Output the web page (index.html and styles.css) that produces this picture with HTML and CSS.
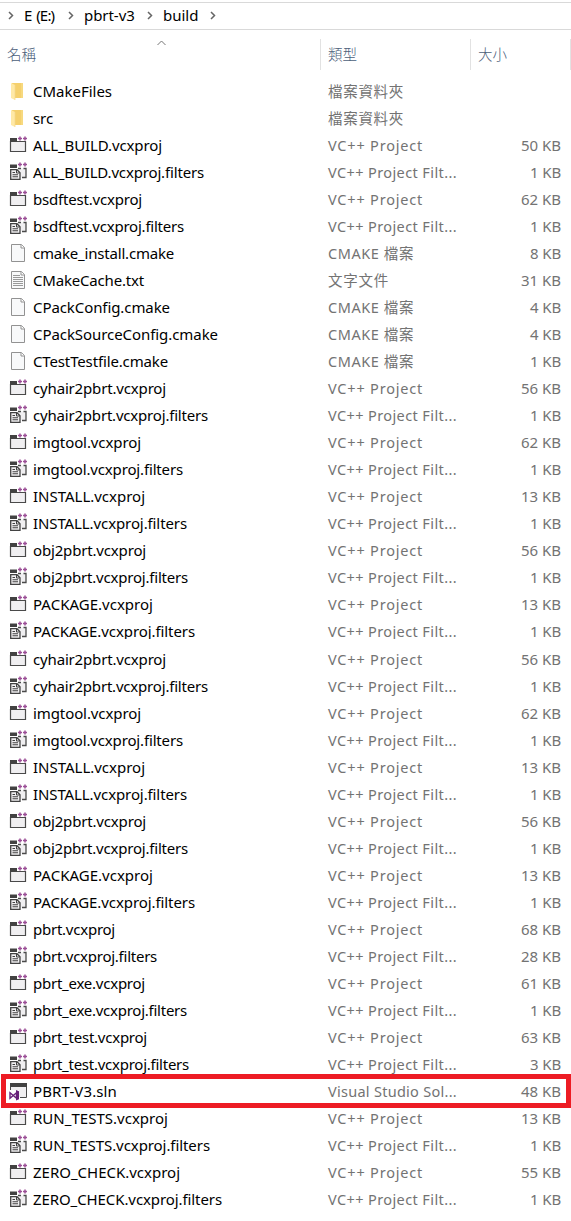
FILE: index.html
```html
<!DOCTYPE html>
<html lang="zh-Hant">
<head>
<meta charset="utf-8">
<title>build</title>
<link rel="stylesheet" href="styles.css">
</head>
<body>
<svg class="sprite" aria-hidden="true">
  <symbol id="folder" viewBox="0 0 20 20">
    <path d="M4 2h10v11h1v4H4z" fill="#f5d06d"/>
    <path d="M13 2h2v15h-2z" fill="#f7d97f"/>
    <path d="M3 2l4 2v15l-4-2z" fill="#ffe9a6"/>
    <path d="M7 4v15" stroke="#f3d98c" stroke-width=".7"/>
  </symbol>
  <symbol id="plus" viewBox="0 0 9 5">
    <path d="M0 2.500h4M2 .5v4M5 2.500h4M7 .5v4" stroke="#9b4f96" stroke-width="1.500" fill="none"/>
  </symbol>
  <symbol id="project" viewBox="0 0 20 20">
    <path d="M2.500 6.500h15v10h-15z" fill="#f0eff1" stroke="#4a4a4a" stroke-width="1.200"/>
    <path d="M2 3h7v4H2z" fill="#424242"/>
    <use href="#plus" x="10" y="1" width="9" height="5"/>
  </symbol>
  <symbol id="filters" viewBox="0 0 20 20">
    <path d="M10 6.500h8v9h-5z" fill="#f0eff1"/>
    <path d="M10 6.500h3M15.500 6.500H18v9h-4" fill="none" stroke="#4a4a4a" stroke-width="1.300"/>
    <path d="M2 2.500h7v3.500H2z" fill="#424242"/>
    <path d="M2.700 7.700h6.300l3 3v6.600H2.700z" fill="#f0eff1" stroke="#424242" stroke-width="1.300"/>
    <path d="M4.500 10.500H7M4.500 12.700h5.500M4.500 14.800h5.500" stroke="#424242" stroke-width="1.100"/>
    <path d="M8.500 8v3h3" fill="none" stroke="#424242"/>
    <use href="#plus" x="10" y="0" width="9" height="5"/>
  </symbol>
  <symbol id="file" viewBox="0 0 20 20">
    <path d="M3.500 1.500h10l3 3v14h-13z" fill="#f8f9fa" stroke="#929292"/>
    <path d="M13 1.500v3.500h3.500" fill="#fff" stroke="#929292"/>
  </symbol>
  <symbol id="text" viewBox="0 0 20 20">
    <use href="#file" width="20" height="20"/>
    <path d="M5 5.500h7M5 7.500h10M5 9.500h10M5 11.500h10M5 13.500h10M5 15.500h10" stroke="#999"/>
  </symbol>
  <symbol id="solution" viewBox="0 0 20 20">
    <path d="M3 6h15v10h-7V9H3z" fill="#f0eff1"/>
    <path d="M2.500 4v5M12 16.500h6.500V4" fill="none" stroke="#4a4a4a"/>
    <path d="M2 2h17v4H2z" fill="#424242"/>
    <path d="M2 11.800v5.400l6.500-5.500v5.600z" fill="#fff" stroke="#68217a" stroke-width="1.400"/>
    <path d="M8 9l3 1.200v8L8 19.400z" fill="#68217a"/>
  </symbol>
</svg>

<nav class="crumbs">
  <svg class="chev" viewBox="0 0 6 9"><path d="M1 1l3.500 3.500L1 8"/></svg>
  <span class="crumb drive">E (E:)</span>
  <svg class="chev" viewBox="0 0 6 9"><path d="M1 1l3.500 3.500L1 8"/></svg>
  <span class="crumb repo">pbrt-v3</span>
  <svg class="chev" viewBox="0 0 6 9"><path d="M1 1l3.500 3.500L1 8"/></svg>
  <span class="crumb current">build</span>
  <svg class="chev" viewBox="0 0 6 9"><path d="M1 1l3.500 3.500L1 8"/></svg>
</nav>
<header class="columns">
  <div class="head">名稱<svg class="sort" viewBox="0 0 9 6"><path d="M.5 5l4-4 4 4"/></svg></div>
  <div class="head">類型</div>
  <div class="head">大小</div>
</header>
<main id="list"></main>
<script src="list.js"></script>
</body>
</html>
```

FILE: styles.css
```css
* { box-sizing: border-box; }
body {
  margin: 0;
  height: 1221px;
  overflow: hidden;
  background: #fff;
  color: #000;
  font: 15px/27px "Noto Sans", "Noto Sans CJK TC", sans-serif;
}
.sprite { position: absolute; width: 0; height: 0; }
.crumbs {
  display: flex;
  align-items: center;
  height: 28px;
  margin-top: 2px;
  padding: 0 0 2px 8px;
  border-top: 1px solid #d9d9d9;
  border-bottom: 1px solid #d9d9d9;
  font-size: 15px;
  white-space: nowrap;
}
.chev { flex: none; width: 6px; height: 9px; fill: none; stroke: #666; stroke-width: 1.5; }
.crumb { flex: none; }
.drive { width: 33px; margin: 0 11px 0 10px; letter-spacing: -.8px; word-spacing: 1.5px; }
.repo { width: 52px; margin: 0 11px 0 10px; letter-spacing: -.05px; }
.current { width: 36px; margin: 0 11px 0 10px; }
.columns {
  display: grid;
  grid-template-columns: 321px 150px 100px;
  height: 48px;
  padding-top: 9px;
}
.head {
  position: relative;
  height: 31px;
  padding-left: 7px;
  border-right: 1px solid #e2e2e2;
  color: #4c607a;
  font-family: "Noto Sans CJK TC", sans-serif;
  font-weight: 300;
  font-size: 14.5px;
  line-height: 29px;
}
.sort { position: absolute; left: 157px; top: 1px; width: 9px; height: 6px; fill: none; stroke: #777; }
.row {
  display: grid;
  grid-template-columns: 33px 295px 160px 1fr;
  height: 27px;
  padding-right: 10px;
  white-space: nowrap;
}
.row.cut { height: 21px; margin-bottom: 7px; overflow: hidden; }
.icon { width: 20px; height: 20px; margin: 3px 0 0 8px; }
.name, .type, .size { height: 27px; }
.type, .size { color: #737373; }
.type { font-size: 14.5px; }
.size { text-align: right; }
.row.marked {
  height: 34px;
  margin: -4px 0 -3px 1px;
  padding-right: 5px;
  border: 5px solid #ed1c24;
  grid-template-columns: 27px 295px 160px 1fr;
}
.marked .icon { margin: 2px 0 0 2px; }
.marked > span { margin-top: -1px; }
```

FILE: list.js
```js
// Each entry: icon, name, name width, type key, size in KB.
const types = {
  d: ["檔案資料夾", 75],
  p: ["VC++ Project", 94],
  f: ["VC++ Project Filt...", 128],
  c: ["CMAKE 檔案", 85],
  t: ["文字文件", 60],
  s: ["Visual Studio Sol...", 128]
};
const project = (name, width, size, filterSize = 1) => [
  ["project", name + ".vcxproj", width, "p", size],
  ["filters", name + ".vcxproj.filters", width + 42, "f", filterSize]
];
const shared = [
  ...project("cyhair2pbrt", 133, 56),
  ...project("imgtool", 108, 62),
  ...project("INSTALL", 112, 13),
  ...project("obj2pbrt", 113, 56),
  ...project("PACKAGE", 120, 13)
];
const rows = [
  ["folder", "CMakeFiles", 79, "d"],
  ["folder", "src", 20, "d"],
  ...project("ALL_BUILD", 129, 50),
  ...project("bsdftest", 109, 62),
  ["file", "cmake_install.cmake", 141, "c", 8],
  ["text", "CMakeCache.txt", 111, "t", 31],
  ["file", "CPackConfig.cmake", 137, "c", 4],
  ["file", "CPackSourceConfig.cmake", 185, "c", 4],
  ["file", "CTestTestfile.cmake", 135, "c", 1],
  ...shared,
  ...shared,
  ...project("pbrt", 82, 68, 28),
  ...project("pbrt_exe", 112, 61),
  ...project("pbrt_test", 114, 63, 3),
  ["solution", "PBRT-V3.sln", 84, "s", 48],
  ...project("RUN_TESTS", 135, 13),
  ...project("ZERO_CHECK", 147, 55)
];

const list = document.getElementById("list");

function cell(row, className, text, width) {
  const box = document.createElement("span");
  box.className = className;
  const label = document.createElement("span");
  label.textContent = text;
  box.append(label);
  row.append(box);
  if (width) {
    const natural = label.getBoundingClientRect().width;
    label.style.letterSpacing = (width - natural) / text.length + "px";
  }
}

rows.forEach(([icon, name, width, type, size], index) => {
  const row = document.createElement("div");
  row.className = "row" + (index === 20 ? " cut" : "") + (icon === "solution" ? " marked" : "");
  row.innerHTML = `<svg class="icon"><use href="#${icon}"/></svg>`;
  list.append(row);
  cell(row, "name", name, width);
  cell(row, "type", types[type][0], types[type][1] + 1);
  cell(row, "size", size ? size + " KB" : "", size ? (size > 9 ? 40 : 31) : 0);
});
```
